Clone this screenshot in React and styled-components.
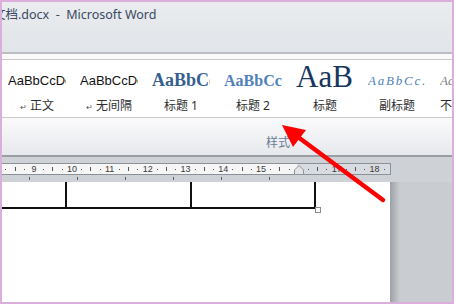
import React from 'react'
import styled, { createGlobalStyle } from 'styled-components'

const GlobalStyle = createGlobalStyle`
  html, body {
    margin: 0;
    padding: 0;
  }
  body {
    width: 454px;
    height: 304px;
    overflow: hidden;
    font-family: "Noto Sans", "Noto Sans CJK SC", sans-serif;
  }
`

const Window = styled.div`
  position: relative;
  width: 454px;
  height: 304px;
  box-sizing: border-box;
  border: 2px solid #dbaedb;
  display: flex;
  flex-direction: column;
  overflow: hidden;
  background: #c9ccd1;
`

const TitleBar = styled.div`
  height: 50px;
  flex: none;
  border-bottom: 2px solid #babdc2;
  background: linear-gradient(#eaecef, #e1e4e8);
  overflow: hidden;
`

const Title = styled.div`
  margin: 4px 0 0 -9px;
  font-size: 12.5px;
  line-height: 18px;
  color: #3a4860;
  white-space: pre;
`

const TabGap = styled.div`
  height: 5px;
  flex: none;
  background: #fafafa;
  border-bottom: 1px solid #c8c9cb;
`

const Gallery = styled.div`
  height: 57px;
  flex: none;
  display: flex;
  background: #fff;
  border-bottom: 1px solid #c9cacc;
  margin-left: -2px;
  overflow: hidden;
`

const StyleItem = styled.div`
  flex: none;
  width: 72px;
  padding-left: 8px;
  box-sizing: border-box;
  display: flex;
  flex-direction: column;
`

const Sample = styled.div`
  width: 58px;
  height: 34px;
  display: flex;
  align-items: flex-end;
  overflow: hidden;
  white-space: nowrap;
  font-family: ${p => p.$serif ? '"Liberation Serif", serif' : '"Liberation Sans", sans-serif'};
  font-size: ${p => p.$size}px;
  font-weight: ${p => p.$bold ? 700 : 400};
  font-style: ${p => p.$italic ? 'italic' : 'normal'};
  letter-spacing: ${p => p.$spacing || 0}px;
  color: ${p => p.$color};
  line-height: 1;
  padding-bottom: ${p => p.$lift}px;
  box-sizing: border-box;
`

const Label = styled.div`
  width: 58px;
  margin-top: 5px;
  text-align: center;
  white-space: nowrap;
  font-size: 12px;
  line-height: 14px;
  color: #2e2e2e;
`

const Mark = styled.span`
  font-size: 8px;
  margin-right: 3px;
  color: #555;
`

const GroupFooter = styled.div`
  height: 39px;
  flex: none;
  box-sizing: border-box;
  display: flex;
  align-items: flex-end;
  padding: 0 0 5px 264px;
  background: linear-gradient(#fbfbfc, #eceef1 70%, #e6e8eb);
  border-bottom: 2px solid #9a9fa6;
`

const GroupName = styled.div`
  font-size: 12px;
  line-height: 14px;
  color: #6a7c94;
`

const Band = styled.div`
  height: ${p => p.$h}px;
  flex: none;
  background: #ced2d7;
`

const RulerRow = styled.div`
  height: 12px;
  flex: none;
  background: #ced2d7;
  position: relative;
`

const RulerStrip = styled.div`
  width: 389px;
  height: 12px;
  box-sizing: border-box;
  border: 1px solid #8b9198;
  border-left: none;
  background: linear-gradient(to right, #f6f6f6 295px, #d8dbdf 295px);
  overflow: hidden;
`

const RulerTrack = styled.div`
  display: flex;
  margin-left: -10.5px;
  height: 10px;
`

const Segment = styled.div`
  flex: none;
  width: 37.8px;
  display: grid;
  grid-template-columns: repeat(4, 1fr);
  align-items: center;
  justify-items: center;
`

const Num = styled.span`
  font-family: "Liberation Sans", sans-serif;
  font-size: 9px;
  line-height: 10px;
  color: #3a3a3a;
`

const Dot = styled.span`
  width: 1px;
  height: 1px;
  background: #555;
`

const Tick = styled.span`
  width: 1px;
  height: 4px;
  background: #555;
`

const IndentMarker = styled.svg`
  position: absolute;
  left: 290px;
  top: 1px;
`

const TabBand = styled.div`
  height: 7px;
  flex: none;
  background: #ced2d7;
  display: flex;
  gap: 47px;
  padding: 2px 0 0 27px;
  box-sizing: border-box;
`

const TabStop = styled.span`
  width: 1px;
  height: 3px;
  background: #5b6066;
`

const Workspace = styled.div`
  flex: 1;
  display: flex;
  min-height: 0;
`

const Page = styled.div`
  width: 388px;
  flex: none;
  background: #fff;
`

const PageShadow = styled.div`
  width: 10px;
  flex: none;
  background: linear-gradient(to right, #9da1a7, #c9ccd1);
`

const Table = styled.div`
  position: relative;
  display: flex;
  width: max-content;
  border-bottom: 2px solid #111;
`

const Cell = styled.div`
  width: ${p => p.$w}px;
  height: 25px;
  border-right: 2px solid #111;
`

const Handle = styled.span`
  position: absolute;
  top: 100%;
  right: -5px;
  width: 4px;
  height: 4px;
  border: 1px solid #8c8c8c;
  background: #fff;
`

const Arrow = styled.svg`
  position: absolute;
  left: -2px;
  top: -2px;
  pointer-events: none;
`

const styles = [
  { text: 'AaBbCcDc', label: '正文', mark: true, size: 13, color: '#111', lift: 7 },
  { text: 'AaBbCcDc', label: '无间隔', mark: true, size: 13, color: '#111', lift: 7 },
  { text: 'AaBbCc', label: '标题 1', serif: true, bold: true, size: 18, color: '#365f91', lift: 5 },
  { text: 'AaBbCc', label: '标题 2', serif: true, bold: true, size: 16, color: '#4f81bd', lift: 5.5 },
  { text: 'AaB', label: '标题', serif: true, size: 31, color: '#17365d', lift: 2 },
  { text: 'AaBbCc.', label: '副标题', serif: true, italic: true, size: 13, spacing: 1.8, color: '#4f81bd', lift: 7.5 },
  { text: 'AaBbCc', label: '不明显强调', serif: true, italic: true, size: 13, color: '#808080', lift: 7.5 },
]

const rulerNumbers = [8, 9, 10, 11, 12, 13, 14, 15, 16, 17, 18, 19]

export default function App() {
  return (
    <>
      <GlobalStyle />
      <Window>
        <TitleBar>
          <Title>文档.docx  -  Microsoft Word</Title>
        </TitleBar>
        <TabGap />
        <Gallery>
          {styles.map((s, i) => (
            <StyleItem key={i}>
              <Sample
                $serif={s.serif}
                $bold={s.bold}
                $italic={s.italic}
                $size={s.size}
                $spacing={s.spacing}
                $color={s.color}
                $lift={s.lift}
              >
                {s.text}
              </Sample>
              <Label>
                {s.mark && <Mark>↵</Mark>}
                {s.label}
              </Label>
            </StyleItem>
          ))}
        </Gallery>
        <GroupFooter>
          <GroupName>样式</GroupName>
        </GroupFooter>
        <Band $h={6} />
        <RulerRow>
          <RulerStrip>
            <RulerTrack>
              {rulerNumbers.map(n => (
                <Segment key={n}>
                  <Num>{n === 16 ? '' : n}</Num>
                  <Dot />
                  <Tick />
                  <Dot />
                </Segment>
              ))}
            </RulerTrack>
          </RulerStrip>
          <IndentMarker width="14" height="11" viewBox="0 0 14 11">
            <path d="M2.5 10.5 V6 L7 1.5 L11.5 6 V10.5 Z" fill="#e4e5e7" stroke="#8f949a" strokeWidth="1" />
          </IndentMarker>
        </RulerRow>
        <TabBand>
          {[0, 1, 2, 3, 4, 5].map(i => <TabStop key={i} />)}
        </TabBand>
        <Workspace>
          <Page>
            <Table>
              <Cell $w={63} />
              <Cell $w={123} />
              <Cell $w={122} />
              <Handle />
            </Table>
          </Page>
          <PageShadow />
        </Workspace>
        <Arrow width="454" height="304" viewBox="0 0 454 304">
          <line x1="383" y1="200" x2="298" y2="137" stroke="#ff0000" strokeWidth="4.5" strokeLinecap="round" />
          <polygon points="282,125 306,130 293,147" fill="#ff0000" />
        </Arrow>
      </Window>
    </>
  )
}
